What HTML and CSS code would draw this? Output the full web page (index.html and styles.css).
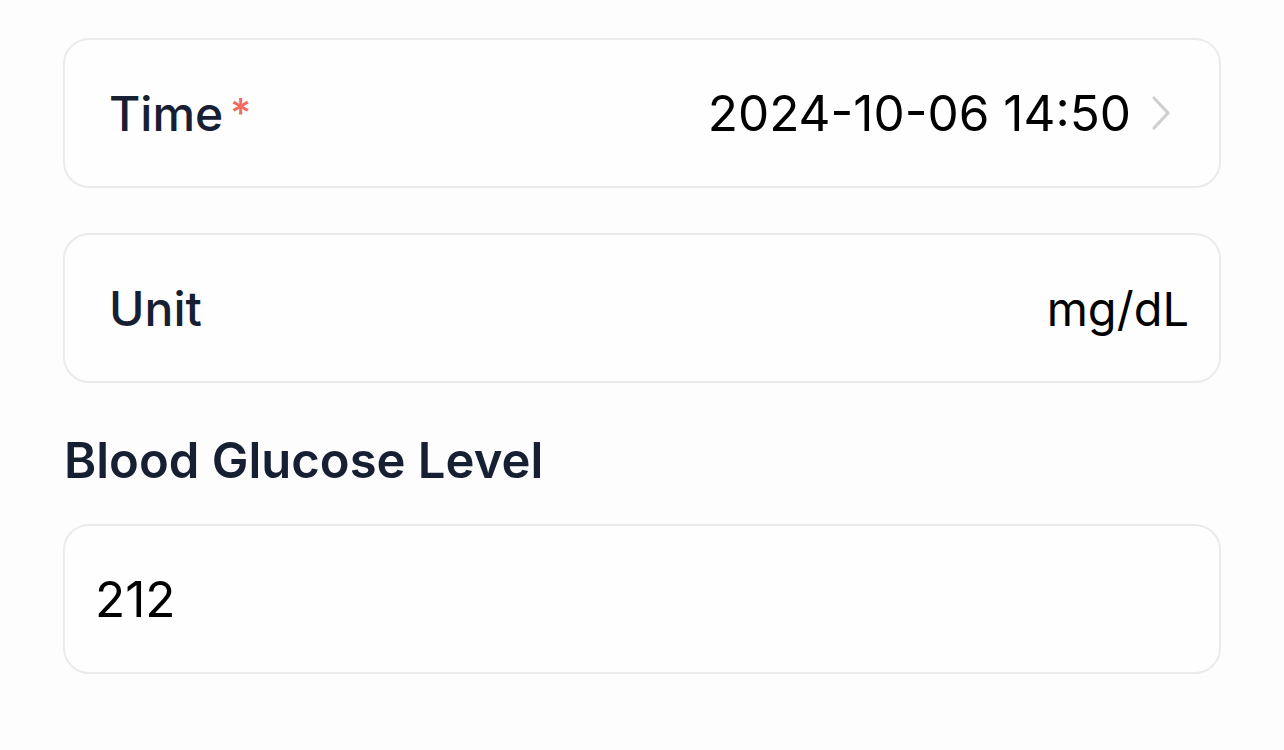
FILE: index.html
```html
<!DOCTYPE html>
<html lang="en">
<head>
<meta charset="utf-8">
<title>Blood Glucose</title>
<link rel="stylesheet" href="styles.css">
</head>
<body>
<main class="form">
  <div class="card row">
    <div class="label">Time<span class="req">*</span></div>
    <div class="value-wrap">
      <span class="value num">2024-10-06 14:50</span>
      <svg class="chev" width="20" height="36" viewBox="0 0 20 36" aria-hidden="true"><path d="M3 3 L17 18 L3 33" fill="none" stroke="#cfcfcf" stroke-width="3.2" stroke-linecap="round" stroke-linejoin="round"/></svg>
    </div>
  </div>
  <div class="card row unit">
    <div class="label">Unit</div>
    <div class="value">mg/dL</div>
  </div>
  <h2 class="section">Blood Glucose Level</h2>
  <div class="card input">
    <span class="value num">212</span>
  </div>
</main>
</body>
</html>
```
FILE: styles.css
```css
html, body {
  margin: 0;
  background: #fdfdfd;
}
body {
  font-family: Inter, "Noto Sans", sans-serif;
}
.form {
  padding: 38px 63px 0 63px;
  display: flex;
  flex-direction: column;
}
.card {
  box-sizing: border-box;
  height: 150px;
  border: 2px solid #ebebeb;
  border-radius: 26px;
  background: #fefefe;
  display: flex;
  align-items: center;
}
.row {
  justify-content: space-between;
  padding: 0 48px 0 44px;
}
.row + .row {
  margin-top: 45px;
}
.unit {
  padding-right: 30px;
}
.label {
  font-size: 48px;
  font-weight: 500;
  color: #172033;
  display: flex;
  align-items: flex-start;
}
.req {
  color: #f26b5e;
  font-size: 40px;
  margin-left: 7px;
  line-height: 1;
  position: relative;
  top: 9px;
}
.value-wrap {
  display: flex;
  align-items: center;
  gap: 20px;
}
.value {
  font-size: 47px;
  font-weight: 400;
  color: #000;
}
.value.num {
  font-size: 49.5px;
}
.chev {
  display: block;
}
.section {
  margin: 50px 0 36px 1px;
  font-size: 49px;
  line-height: 55px;
  font-weight: 600;
  color: #172033;
}
.input {
  padding: 0 30px;
}
```
